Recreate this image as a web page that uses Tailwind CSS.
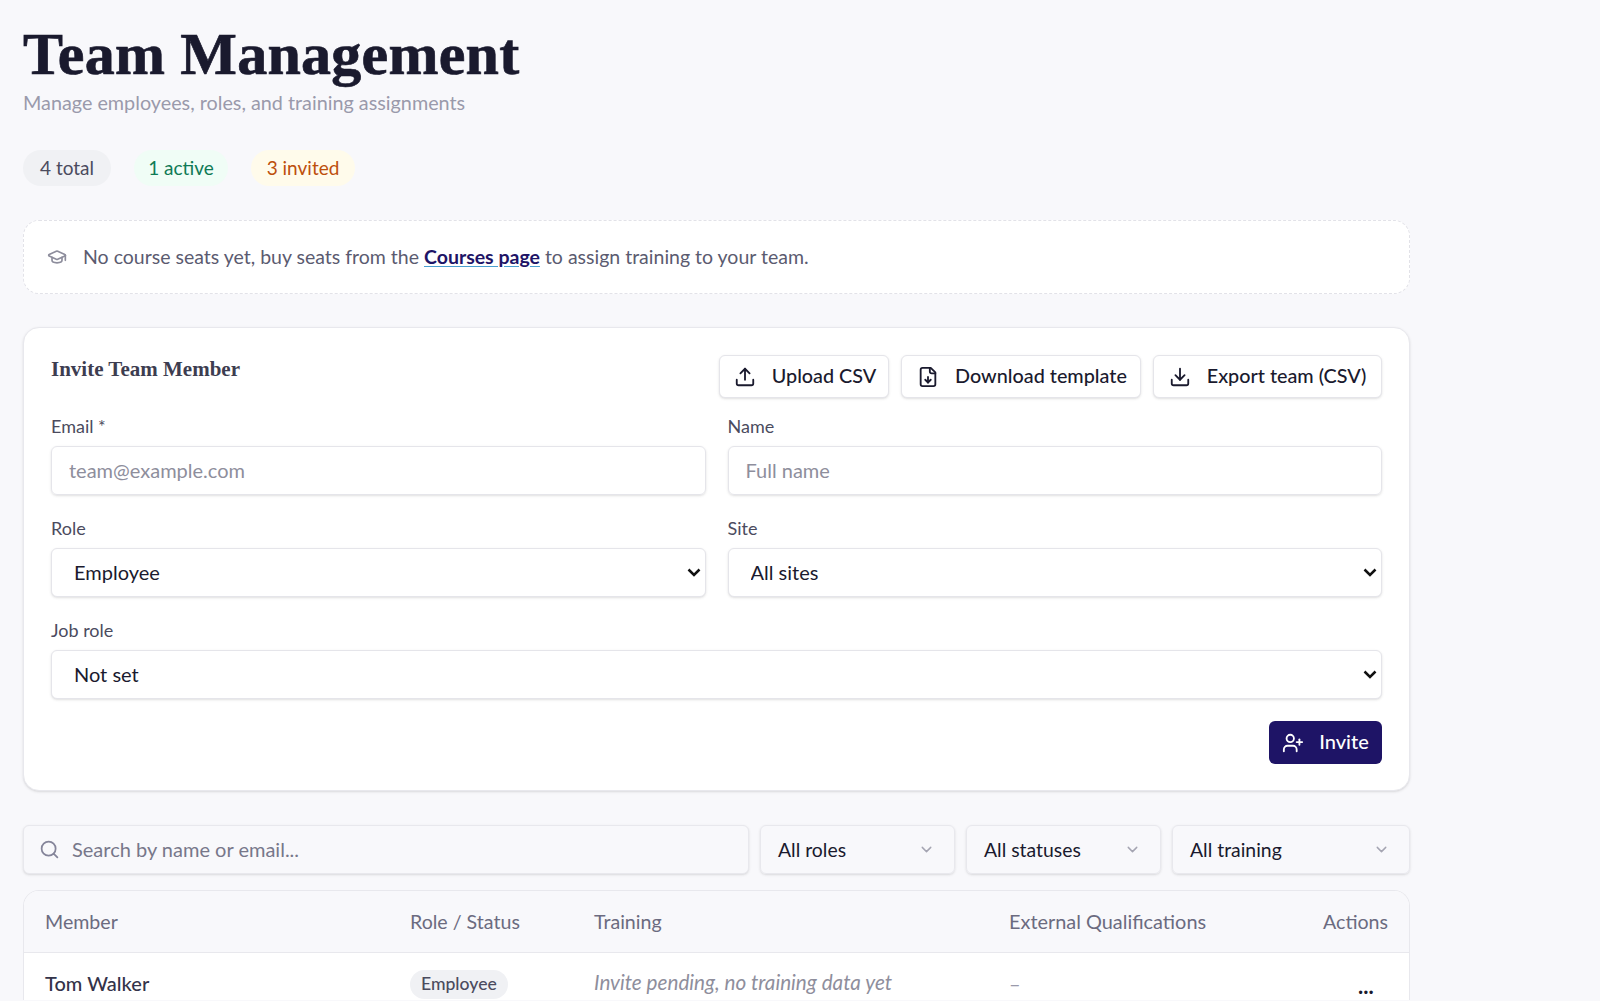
<!DOCTYPE html>
<html lang="en">
<head>
  <meta charset="UTF-8" />
  <title>Team Management</title>
  <script src="https://cdn.jsdelivr.net/npm/@tailwindcss/browser@4"></script>
</head>
<body class="bg-[#f8f8fb] h-[1001px] overflow-hidden font-['Lato',sans-serif] text-[#1a1a2e]">
  <main class="w-[1410px] pl-[23px] pt-[22px]">
    <h1 class="font-['Liberation_Serif',serif] font-bold text-[60px] leading-[64px] text-[#1a1a2e] [-webkit-text-stroke:0.7px_#1a1a2e] tracking-[0.25px]">Team Management</h1>
    <p class="text-[19.8px] leading-[26px] mt-[3px] text-[#9a9aab]">Manage employees, roles, and training assignments</p>

    <div class="flex gap-[23px] mt-[35px] text-[19px]">
      <span class="h-9 w-[88px] rounded-full bg-[#f0f1f4] text-[#4b4b5e] flex items-center justify-center">4 total</span>
      <span class="h-9 w-[94px] rounded-full bg-[#f0fdf6] text-[#0f7a55] flex items-center justify-center">1 active</span>
      <span class="h-9 w-[104px] rounded-full bg-[#fffbeb] text-[#bd4f0c] flex items-center justify-center">3 invited</span>
    </div>

    <div class="mt-[34px] h-[74px] bg-white rounded-2xl border border-dashed border-[#e2e2e8] flex items-center pl-[23px] pb-[1px] gap-[16px] text-[19.5px] text-[#5b5b70]">
      <svg class="w-5 h-5 text-[#8d8d9c]" viewBox="0 0 24 24" fill="none" stroke="currentColor" stroke-width="2" stroke-linecap="round" stroke-linejoin="round"><path d="M21.42 10.922a1 1 0 0 0-.019-1.838L12.83 5.18a2 2 0 0 0-1.66 0L2.6 9.08a1 1 0 0 0 0 1.832l8.57 3.908a2 2 0 0 0 1.66 0z"/><path d="M22 10v6"/><path d="M6 12.5V16a6 3 0 0 0 12 0v-3.5"/></svg>
      <p>No course seats yet, buy seats from the <a href="#" class="font-bold text-[#1e1466] underline decoration-[#4a9fd0] underline-offset-2">Courses page</a> to assign training to your team.</p>
    </div>

    <section class="mt-[33px] h-[464px] bg-white rounded-2xl border border-[#e8e8ed] shadow-sm px-[27px] pt-[27px]">
      <div class="flex justify-between items-start">
        <h2 class="font-['Liberation_Serif',serif] font-bold text-[21px] leading-[26px] mt-[1px] text-[#3d3d50]">Invite Team Member</h2>
        <div class="flex gap-3 text-[19.8px] font-medium text-[#1a1a2e]">
          <button class="h-[43px] w-[170px] bg-white border border-[#e5e5ea] rounded-md shadow-sm flex items-center justify-center gap-[16px] pl-[2px]">
            <svg class="w-[22px] h-[22px]" viewBox="0 0 24 24" fill="none" stroke="currentColor" stroke-width="2" stroke-linecap="round" stroke-linejoin="round"><path d="M12 3v12"/><path d="m17 8-5-5-5 5"/><path d="M21 15v4a2 2 0 0 1-2 2H5a2 2 0 0 1-2-2v-4"/></svg>
            <span class="pb-[1px]">Upload CSV</span>
          </button>
          <button class="h-[43px] w-[240px] bg-white border border-[#e5e5ea] rounded-md shadow-sm flex items-center justify-center gap-[16px] pl-[2px]">
            <svg class="w-[22px] h-[22px]" viewBox="0 0 24 24" fill="none" stroke="currentColor" stroke-width="2" stroke-linecap="round" stroke-linejoin="round"><path d="M15 2H6a2 2 0 0 0-2 2v16a2 2 0 0 0 2 2h12a2 2 0 0 0 2-2V7Z"/><path d="M14 2v4a2 2 0 0 0 2 2h4"/><path d="M12 18v-6"/><path d="m9 15 3 3 3-3"/></svg>
            <span class="pb-[1px]">Download template</span>
          </button>
          <button class="h-[43px] w-[229px] bg-white border border-[#e5e5ea] rounded-md shadow-sm flex items-center justify-center gap-[16px]">
            <svg class="w-[22px] h-[22px]" viewBox="0 0 24 24" fill="none" stroke="currentColor" stroke-width="2" stroke-linecap="round" stroke-linejoin="round"><path d="M12 15V3"/><path d="m7 10 5 5 5-5"/><path d="M21 15v4a2 2 0 0 1-2 2H5a2 2 0 0 1-2-2v-4"/></svg>
            <span class="pb-[1px]">Export team (CSV)</span>
          </button>
        </div>
      </div>

      <div class="grid grid-cols-2 gap-x-[22px] gap-y-[22px] mt-[17px] text-[18px]">
        <div>
          <label class="block text-[#4b4b5e] leading-[22px] mb-[9px]">Email *</label>
          <input type="text" placeholder="team@example.com" class="w-full h-[49px] px-[17px] pb-[2px] text-[20px] border border-[#e5e5ea] rounded-md shadow-sm placeholder:text-[#8e8e9c]" />
        </div>
        <div>
          <label class="block text-[#4b4b5e] leading-[22px] mb-[9px]">Name</label>
          <input type="text" placeholder="Full name" class="w-full h-[49px] px-[17px] pb-[2px] text-[20px] border border-[#e5e5ea] rounded-md shadow-sm placeholder:text-[#8e8e9c]" />
        </div>
        <div>
          <label class="block text-[#4b4b5e] leading-[22px] mb-[9px]">Role</label>
          <div class="relative">
            <select class="appearance-none w-full h-[49px] px-[22px] pb-[2px] text-[20px] bg-white border border-[#e5e5ea] rounded-md shadow-sm text-[#1a1a2e]"><option>Employee</option></select>
            <svg class="absolute right-[5px] top-[20px] w-[14px] h-[9px] pointer-events-none" viewBox="0 0 14 9" fill="none" stroke="#111" stroke-width="2.5"><path d="M1.5 1.5 7 7l5.5-5.5"/></svg>
          </div>
        </div>
        <div>
          <label class="block text-[#4b4b5e] leading-[22px] mb-[9px]">Site</label>
          <div class="relative">
            <select class="appearance-none w-full h-[49px] px-[22px] pb-[2px] text-[20px] bg-white border border-[#e5e5ea] rounded-md shadow-sm text-[#1a1a2e]"><option>All sites</option></select>
            <svg class="absolute right-[5px] top-[20px] w-[14px] h-[9px] pointer-events-none" viewBox="0 0 14 9" fill="none" stroke="#111" stroke-width="2.5"><path d="M1.5 1.5 7 7l5.5-5.5"/></svg>
          </div>
        </div>
        <div class="col-span-2">
          <label class="block text-[#4b4b5e] leading-[22px] mb-[9px]">Job role</label>
          <div class="relative">
            <select class="appearance-none w-full h-[49px] px-[22px] pb-[2px] text-[20px] bg-white border border-[#e5e5ea] rounded-md shadow-sm text-[#1a1a2e]"><option>Not set</option></select>
            <svg class="absolute right-[5px] top-[20px] w-[14px] h-[9px] pointer-events-none" viewBox="0 0 14 9" fill="none" stroke="#111" stroke-width="2.5"><path d="M1.5 1.5 7 7l5.5-5.5"/></svg>
          </div>
        </div>
      </div>

      <div class="flex justify-end mt-[22px]">
        <button class="h-[43px] w-[113px] bg-[#1e1466] text-white rounded-md text-[20px] font-medium flex items-center justify-center gap-[15px]">
          <svg class="w-[22px] h-[22px]" viewBox="0 0 24 24" fill="none" stroke="currentColor" stroke-width="2" stroke-linecap="round" stroke-linejoin="round"><path d="M16 21v-2a4 4 0 0 0-4-4H6a4 4 0 0 0-4 4v2"/><circle cx="9" cy="7" r="4"/><path d="M19 8v6"/><path d="M22 11h-6"/></svg>
          <span class="pb-[3px]">Invite</span>
        </button>
      </div>
    </section>

    <div class="flex gap-[11px] mt-[34px] text-[19.4px]">
      <div class="w-[726px] h-[49px] bg-[#f8f8fb] border border-[#e8e8ed] rounded-md shadow-sm flex items-center pl-[15px] gap-[12px]">
        <svg class="w-[21px] h-[21px] text-[#85859a]" viewBox="0 0 24 24" fill="none" stroke="currentColor" stroke-width="2" stroke-linecap="round" stroke-linejoin="round"><path d="m21 21-4.34-4.34"/><circle cx="11" cy="11" r="8"/></svg>
        <span class="text-[#77778a] text-[20px] pb-[1px]">Search by name or email...</span>
      </div>
      <div class="w-[195px] h-[49px] border border-[#e8e8ed] rounded-md shadow-sm flex items-center justify-between pl-[17px] pr-[19px]">
        <span>All roles</span>
        <svg class="w-[17px] h-[17px] text-[#a5a5b2]" viewBox="0 0 24 24" fill="none" stroke="currentColor" stroke-width="2" stroke-linecap="round" stroke-linejoin="round"><path d="m6 9 6 6 6-6"/></svg>
      </div>
      <div class="w-[195px] h-[49px] border border-[#e8e8ed] rounded-md shadow-sm flex items-center justify-between pl-[17px] pr-[19px]">
        <span>All statuses</span>
        <svg class="w-[17px] h-[17px] text-[#a5a5b2]" viewBox="0 0 24 24" fill="none" stroke="currentColor" stroke-width="2" stroke-linecap="round" stroke-linejoin="round"><path d="m6 9 6 6 6-6"/></svg>
      </div>
      <div class="w-[238px] h-[49px] border border-[#e8e8ed] rounded-md shadow-sm flex items-center justify-between pl-[17px] pr-[19px]">
        <span>All training</span>
        <svg class="w-[17px] h-[17px] text-[#a5a5b2]" viewBox="0 0 24 24" fill="none" stroke="currentColor" stroke-width="2" stroke-linecap="round" stroke-linejoin="round"><path d="m6 9 6 6 6-6"/></svg>
      </div>
    </div>

    <div class="mt-[16px] h-[110px] bg-white rounded-t-2xl border border-b-0 border-[#e8e8ed] overflow-hidden">
      <div class="grid grid-cols-[365px_184px_415px_1fr_auto] pl-[21px] pr-[21px] h-[62px] items-center bg-[#f8f8fb] border-b border-[#e8e8ed] text-[19.6px] text-[#6b6b80]">
        <span>Member</span><span>Role / Status</span><span>Training</span><span class="text-[19.9px]">External Qualifications</span><span>Actions</span>
      </div>
      <div class="grid grid-cols-[365px_184px_415px_1fr_auto] pl-[21px] pr-[21px] h-[60px] items-center text-[20px]">
        <span class="text-[#33334a] font-medium">Tom Walker</span>
        <span><span class="inline-flex items-center h-[29px] px-[11px] rounded-full bg-[#f0f1f4] text-[#4b4b5e] text-[17.6px] font-medium">Employee</span></span>
        <span class="italic text-[#8e8e9c] text-[20.7px]">Invite pending, no training data yet</span>
        <span class="text-[#9a9aab]">–</span>
        <span class="font-bold text-[22px] text-[#1a1a2e] pl-[34px] pt-[4px] w-[64px]">...</span>
      </div>
    </div>
  </main>
</body>
</html>
